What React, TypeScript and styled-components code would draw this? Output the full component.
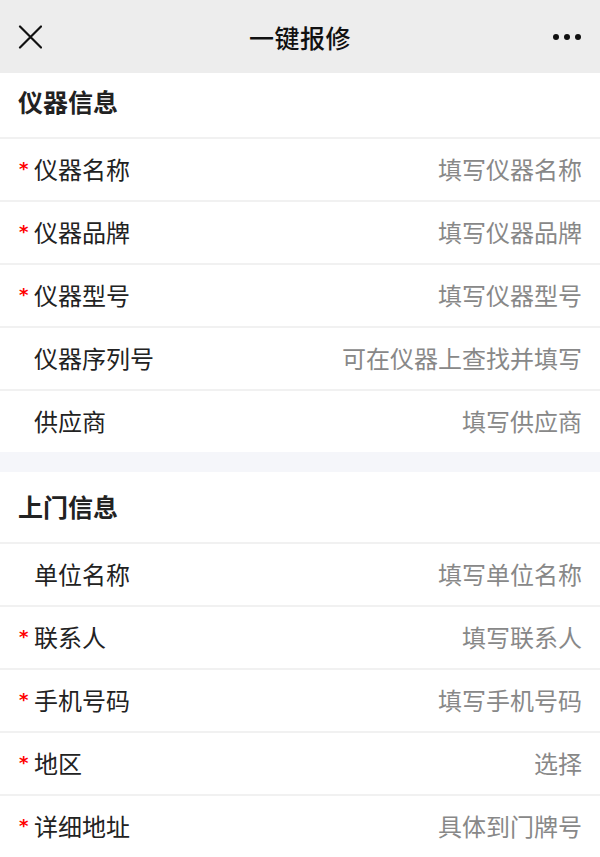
import * as React from 'react';
import styled, { createGlobalStyle } from 'styled-components';

const GlobalStyle = createGlobalStyle`
  html, body {
    margin: 0;
    padding: 0;
    background: #fff;
  }
  body {
    font-family: "Noto Sans CJK SC", "Noto Sans", sans-serif;
    color: #222;
  }
`;

const Page = styled.div`
  width: 600px;
  min-height: 857px;
  background: #fff;
  overflow: hidden;
`;

const NavBar = styled.header`
  height: 73px;
  background: #ededed;
  display: grid;
  grid-template-columns: 80px 1fr 80px;
  align-items: center;
  padding: 0 18px;
  box-sizing: border-box;
`;

const NavTitle = styled.h1`
  margin: 0;
  text-align: center;
  font-size: 25px;
  font-weight: 500;
  color: #111;
  letter-spacing: 0.5px;
`;

const NavButton = styled.button<{ $right?: boolean }>`
  border: 0;
  background: none;
  padding: 0;
  display: flex;
  justify-content: ${p => (p.$right ? 'flex-end' : 'flex-start')};
  align-items: center;
  height: 40px;
  cursor: pointer;
`;

const SectionTitle = styled.h2<{ $first?: boolean }>`
  margin: 0;
  height: ${p => (p.$first ? '66px' : '72px')};
  padding: ${p => (p.$first ? '0 18px 8px' : '0 18px 2px')};
  box-sizing: border-box;
  display: flex;
  align-items: center;
  font-size: 25px;
  font-weight: 700;
  color: #222;
  border-bottom: 2px solid #f1f1f1;
`;

const Row = styled.div`
  height: 63px;
  box-sizing: border-box;
  display: flex;
  align-items: center;
  justify-content: space-between;
  padding: 0 18px 3px;
  border-bottom: 2px solid #f1f1f1;
  &:last-child {
    border-bottom: 0;
    height: 61px;
  }
`;

const Label = styled.span`
  display: flex;
  align-items: baseline;
  font-size: 24px;
  color: #222;
`;

const Star = styled.span<{ $show: boolean }>`
  width: 16px;
  padding-left: 1px;
  box-sizing: border-box;
  font-family: "DejaVu Sans", sans-serif;
  font-size: 18px;
  font-weight: 700;
  color: #f00;
  transform: translateY(-4px);
  visibility: ${p => (p.$show ? 'visible' : 'hidden')};
`;

const Placeholder = styled.span`
  font-size: 24px;
  color: #888;
`;

const Gap = styled.div`
  height: 20px;
  background: #f5f6fa;
`;

const Section = styled.section`
  background: #fff;
`;

type Field = { label: string; hint: string; required?: boolean };

const device: Field[] = [
  { label: '仪器名称', hint: '填写仪器名称', required: true },
  { label: '仪器品牌', hint: '填写仪器品牌', required: true },
  { label: '仪器型号', hint: '填写仪器型号', required: true },
  { label: '仪器序列号', hint: '可在仪器上查找并填写' },
  { label: '供应商', hint: '填写供应商' },
];

const visit: Field[] = [
  { label: '单位名称', hint: '填写单位名称' },
  { label: '联系人', hint: '填写联系人', required: true },
  { label: '手机号码', hint: '填写手机号码', required: true },
  { label: '地区', hint: '选择', required: true },
  { label: '详细地址', hint: '具体到门牌号', required: true },
];

const CloseIcon = () => (
  <svg width="24" height="24" viewBox="0 0 24 24">
    <path d="M2 1.5 L23 22.5 M23 1.5 L2 22.5" stroke="#111" strokeWidth="2.2" strokeLinecap="round" />
  </svg>
);

const MoreIcon = () => (
  <svg width="30" height="8" viewBox="0 0 30 8">
    <circle cx="4" cy="4" r="3" fill="#111" />
    <circle cx="15" cy="4" r="3" fill="#111" />
    <circle cx="26" cy="4" r="3" fill="#111" />
  </svg>
);

const FieldList = ({ fields }: { fields: Field[] }) => (
  <>
    {fields.map(f => (
      <Row key={f.label}>
        <Label>
          <Star $show={!!f.required}>*</Star>
          {f.label}
        </Label>
        <Placeholder>{f.hint}</Placeholder>
      </Row>
    ))}
  </>
);

export default function App() {
  return (
    <Page>
      <GlobalStyle />
      <NavBar>
        <NavButton aria-label="关闭">
          <CloseIcon />
        </NavButton>
        <NavTitle>一键报修</NavTitle>
        <NavButton $right aria-label="更多">
          <MoreIcon />
        </NavButton>
      </NavBar>
      <Section>
        <SectionTitle $first>仪器信息</SectionTitle>
        <FieldList fields={device} />
      </Section>
      <Gap />
      <Section>
        <SectionTitle>上门信息</SectionTitle>
        <FieldList fields={visit} />
      </Section>
    </Page>
  );
}
